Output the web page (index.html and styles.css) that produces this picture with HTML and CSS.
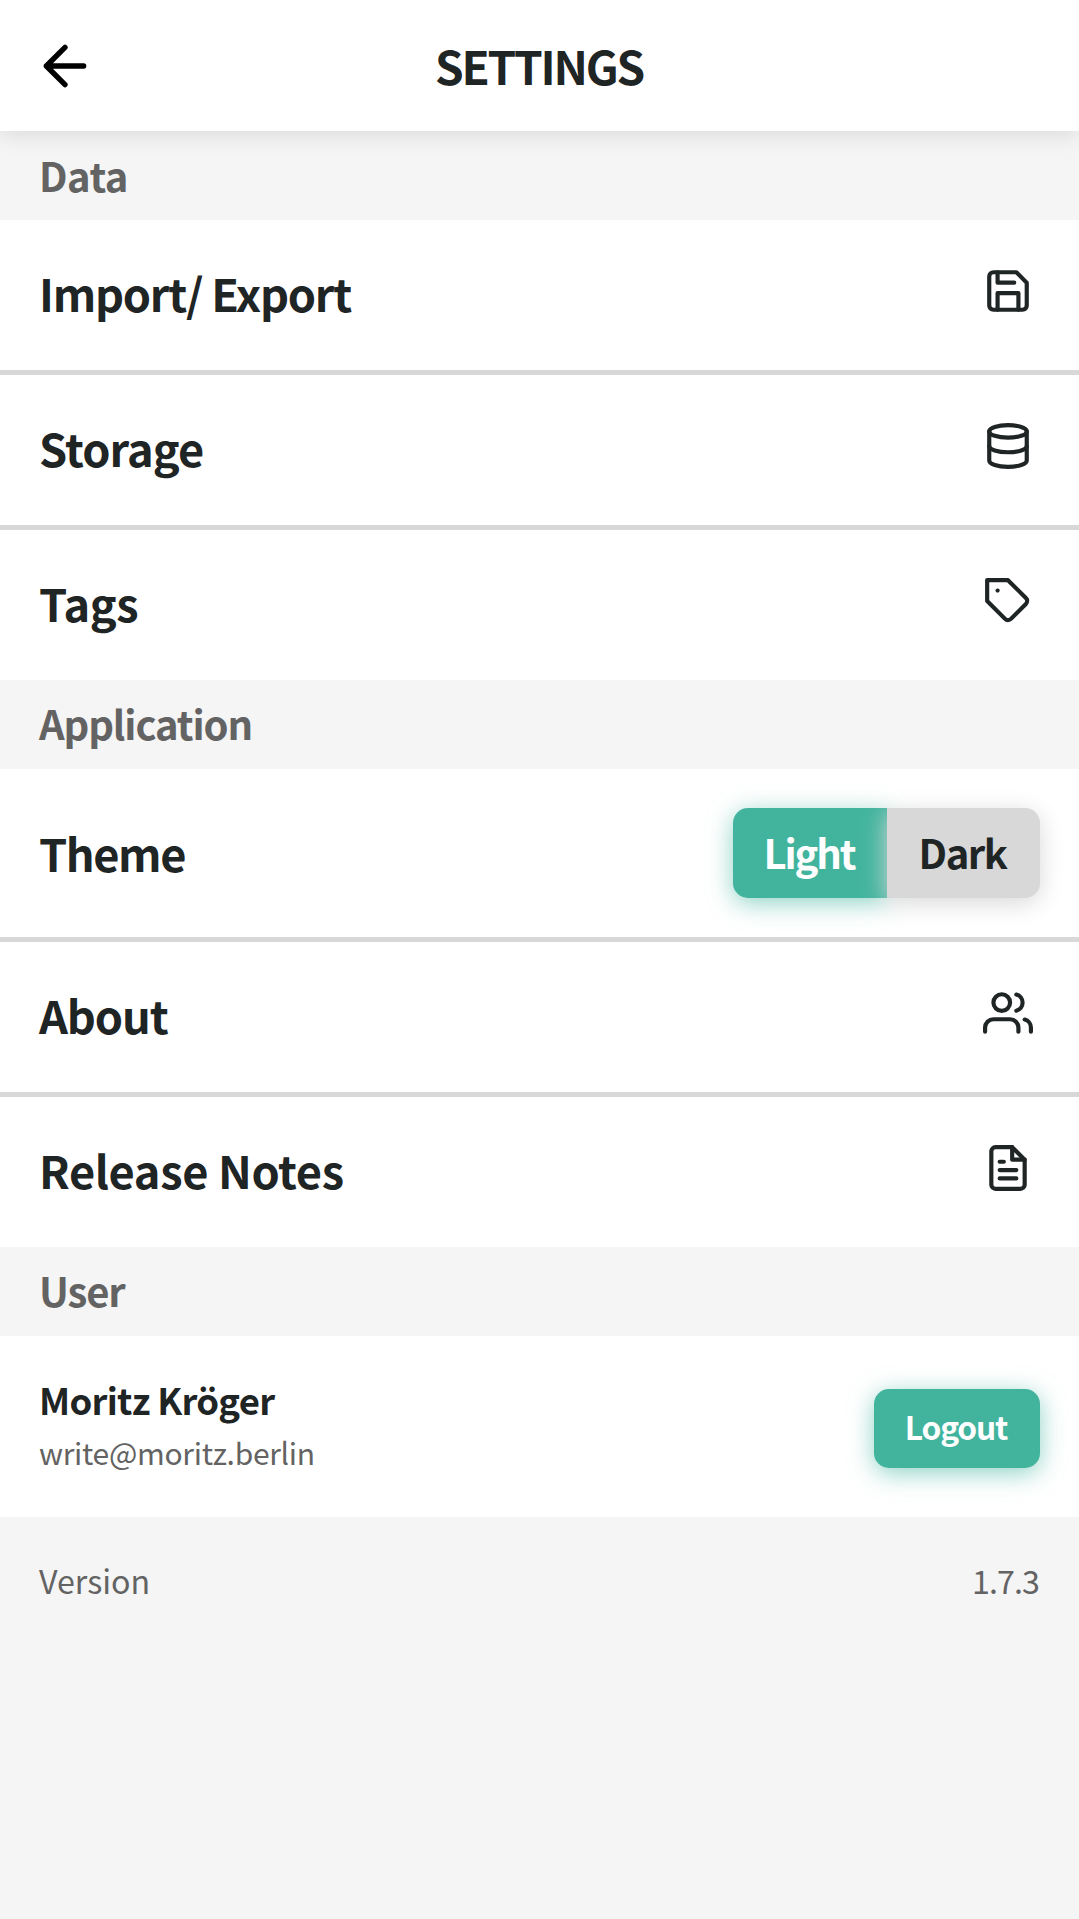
FILE: index.html
```html
<!DOCTYPE html>
<html lang="en">
<head>
<meta charset="utf-8">
<title>Settings</title>
<link rel="stylesheet" href="styles.css">
</head>
<body>
<header class="header">
  <svg class="back" viewBox="0 0 24 24"><path d="M19 12H5M12 19l-7-7 7-7"/></svg>
  <h1 class="title">SETTINGS</h1>
</header>
<main>
  <h2 class="section data">Data</h2>
  <div class="row">
    <span class="label import">Import/ Export</span>
    <svg class="icon" viewBox="0 0 24 24"><path d="M19 21H5a2 2 0 0 1-2-2V5a2 2 0 0 1 2-2h11l5 5v11a2 2 0 0 1-2 2z"/><path d="M17 21v-8H7v8M7 3v5h8"/></svg>
  </div>
  <div class="row">
    <span class="label storage">Storage</span>
    <svg class="icon" viewBox="0 0 24 24"><ellipse cx="12" cy="5" rx="9" ry="3"/><path d="M21 12c0 1.66-4 3-9 3s-9-1.34-9-3"/><path d="M3 5v14c0 1.66 4 3 9 3s9-1.34 9-3V5"/></svg>
  </div>
  <div class="row last">
    <span class="label tags">Tags</span>
    <svg class="icon" viewBox="0 0 24 24"><path d="M20.59 13.41l-7.17 7.17a2 2 0 0 1-2.83 0L2 12V2h10l8.59 8.59a2 2 0 0 1 0 2.82z"/><path d="M7 7h.01"/></svg>
  </div>
  <h2 class="section application">Application</h2>
  <div class="row theme">
    <span class="label theme-label">Theme</span>
    <div class="toggle"><button class="option light">Light</button><button class="option dark">Dark</button></div>
  </div>
  <div class="row">
    <span class="label about">About</span>
    <svg class="icon" viewBox="0 0 24 24"><path d="M17 21v-2a4 4 0 0 0-4-4H5a4 4 0 0 0-4 4v2"/><circle cx="9" cy="7" r="4"/><path d="M23 21v-2a4 4 0 0 0-3-3.87M16 3.13a4 4 0 0 1 0 7.75"/></svg>
  </div>
  <div class="row last">
    <span class="label release">Release Notes</span>
    <svg class="icon" viewBox="0 0 24 24"><path d="M14 2H6a2 2 0 0 0-2 2v16a2 2 0 0 0 2 2h12a2 2 0 0 0 2-2V8z"/><path d="M14 2v6h6M16 13H8M16 17H8M10 9H8"/></svg>
  </div>
  <h2 class="section user-heading">User</h2>
  <div class="user">
    <div class="person">
      <span class="name">Moritz Kröger</span>
      <span class="email">write@moritz.berlin</span>
    </div>
    <button class="logout">Logout</button>
  </div>
  <div class="version"><span>Version</span><span class="number">1.7.3</span></div>
</main>
</body>
</html>
```
FILE: styles.css
```css
* { box-sizing: border-box; }
body {
  margin: 0;
  min-height: 100vh;
  background: #f5f5f5;
  color: #1f2424;
  font-family: "Noto Sans CJK SC", "Noto Sans", sans-serif;
}
h1, h2 { margin: 0; }
button { border: 0; font-family: inherit; font-weight: 700; white-space: nowrap; }
svg { fill: none; stroke: currentColor; stroke-width: 2; stroke-linecap: round; stroke-linejoin: round; flex: none; }

.header {
  position: relative;
  z-index: 1;
  display: grid;
  grid-template-columns: 64px 1fr 64px;
  align-items: center;
  height: 131px;
  padding: 0 33px;
  background: #fff;
  box-shadow: 0 5px 20px rgba(0, 0, 0, .1);
}
.back { width: 64px; height: 64px; color: #000; }
.title {
  padding: 0 1px 2px 0;
  text-align: center;
  font-size: 46px;
  line-height: 60px;
  font-weight: 700;
  letter-spacing: -2.2px;
}

.section {
  height: 89px;
  padding: 0 39px 2px;
  color: #636363;
  font-size: 40px;
  line-height: 87px;
  font-weight: 700;
  letter-spacing: -1.1px;
}
.data { padding-top: 1px; letter-spacing: -.5px; }

.row {
  display: flex;
  align-items: center;
  justify-content: space-between;
  height: 155px;
  padding: 0 46px 0 39px;
  background: #fff;
  border-bottom: 5px solid #d8d8d8;
}
.row.last { height: 150px; border-bottom: 0; }
.row.theme { height: 173px; padding-right: 39px; }
.label {
  padding-bottom: 4px;
  font-size: 45.2px;
  line-height: 60px;
  font-weight: 700;
  letter-spacing: -1.1px;
}
.import { letter-spacing: -1.25px; }
.storage { letter-spacing: -.9px; }
.tags { letter-spacing: -.4px; }
.theme-label { padding-bottom: 1px; letter-spacing: -1.45px; }
.release { letter-spacing: -.38px; }
.icon { width: 50px; height: 50px; margin-bottom: 8px; }

.toggle { display: flex; }
.option {
  height: 90px;
  padding: 0 2px 2px 0;
  font-size: 40px;
  line-height: 86px;
  letter-spacing: -2.1px;
}
.light {
  width: 154px;
  border-radius: 15px 0 0 15px;
  background: #42b49e;
  color: #fff;
  box-shadow: 0 5px 25px rgba(66, 180, 158, .6);
}
.dark {
  width: 153px;
  border-radius: 0 15px 15px 0;
  background: #d8d8d8;
  color: #1f2424;
  letter-spacing: -1.5px;
  box-shadow: 0 5px 25px #d8d8d8;
}

.user {
  display: flex;
  align-items: center;
  justify-content: space-between;
  height: 181px;
  padding: 0 39px;
  background: #fff;
}
.person { display: flex; flex-direction: column; padding-bottom: 1px; }
.name { font-size: 36.5px; line-height: 52px; font-weight: 700; letter-spacing: -.73px; }
.email { color: #636363; font-size: 30px; line-height: 52px; letter-spacing: -.3px; }
.logout {
  width: 166px;
  height: 79px;
  margin-top: 3px;
  padding: 0 2px 4px 0;
  border-radius: 15px;
  background: #42b49e;
  color: #fff;
  font-size: 31.7px;
  letter-spacing: -1.15px;
  box-shadow: 0 5px 25px rgba(66, 180, 158, .6);
}
.version {
  display: flex;
  justify-content: space-between;
  padding: 37px 40px 36px 39px;
  color: #636363;
  font-size: 32.2px;
  line-height: 52px;
}
.number { letter-spacing: -.9px; }
```
